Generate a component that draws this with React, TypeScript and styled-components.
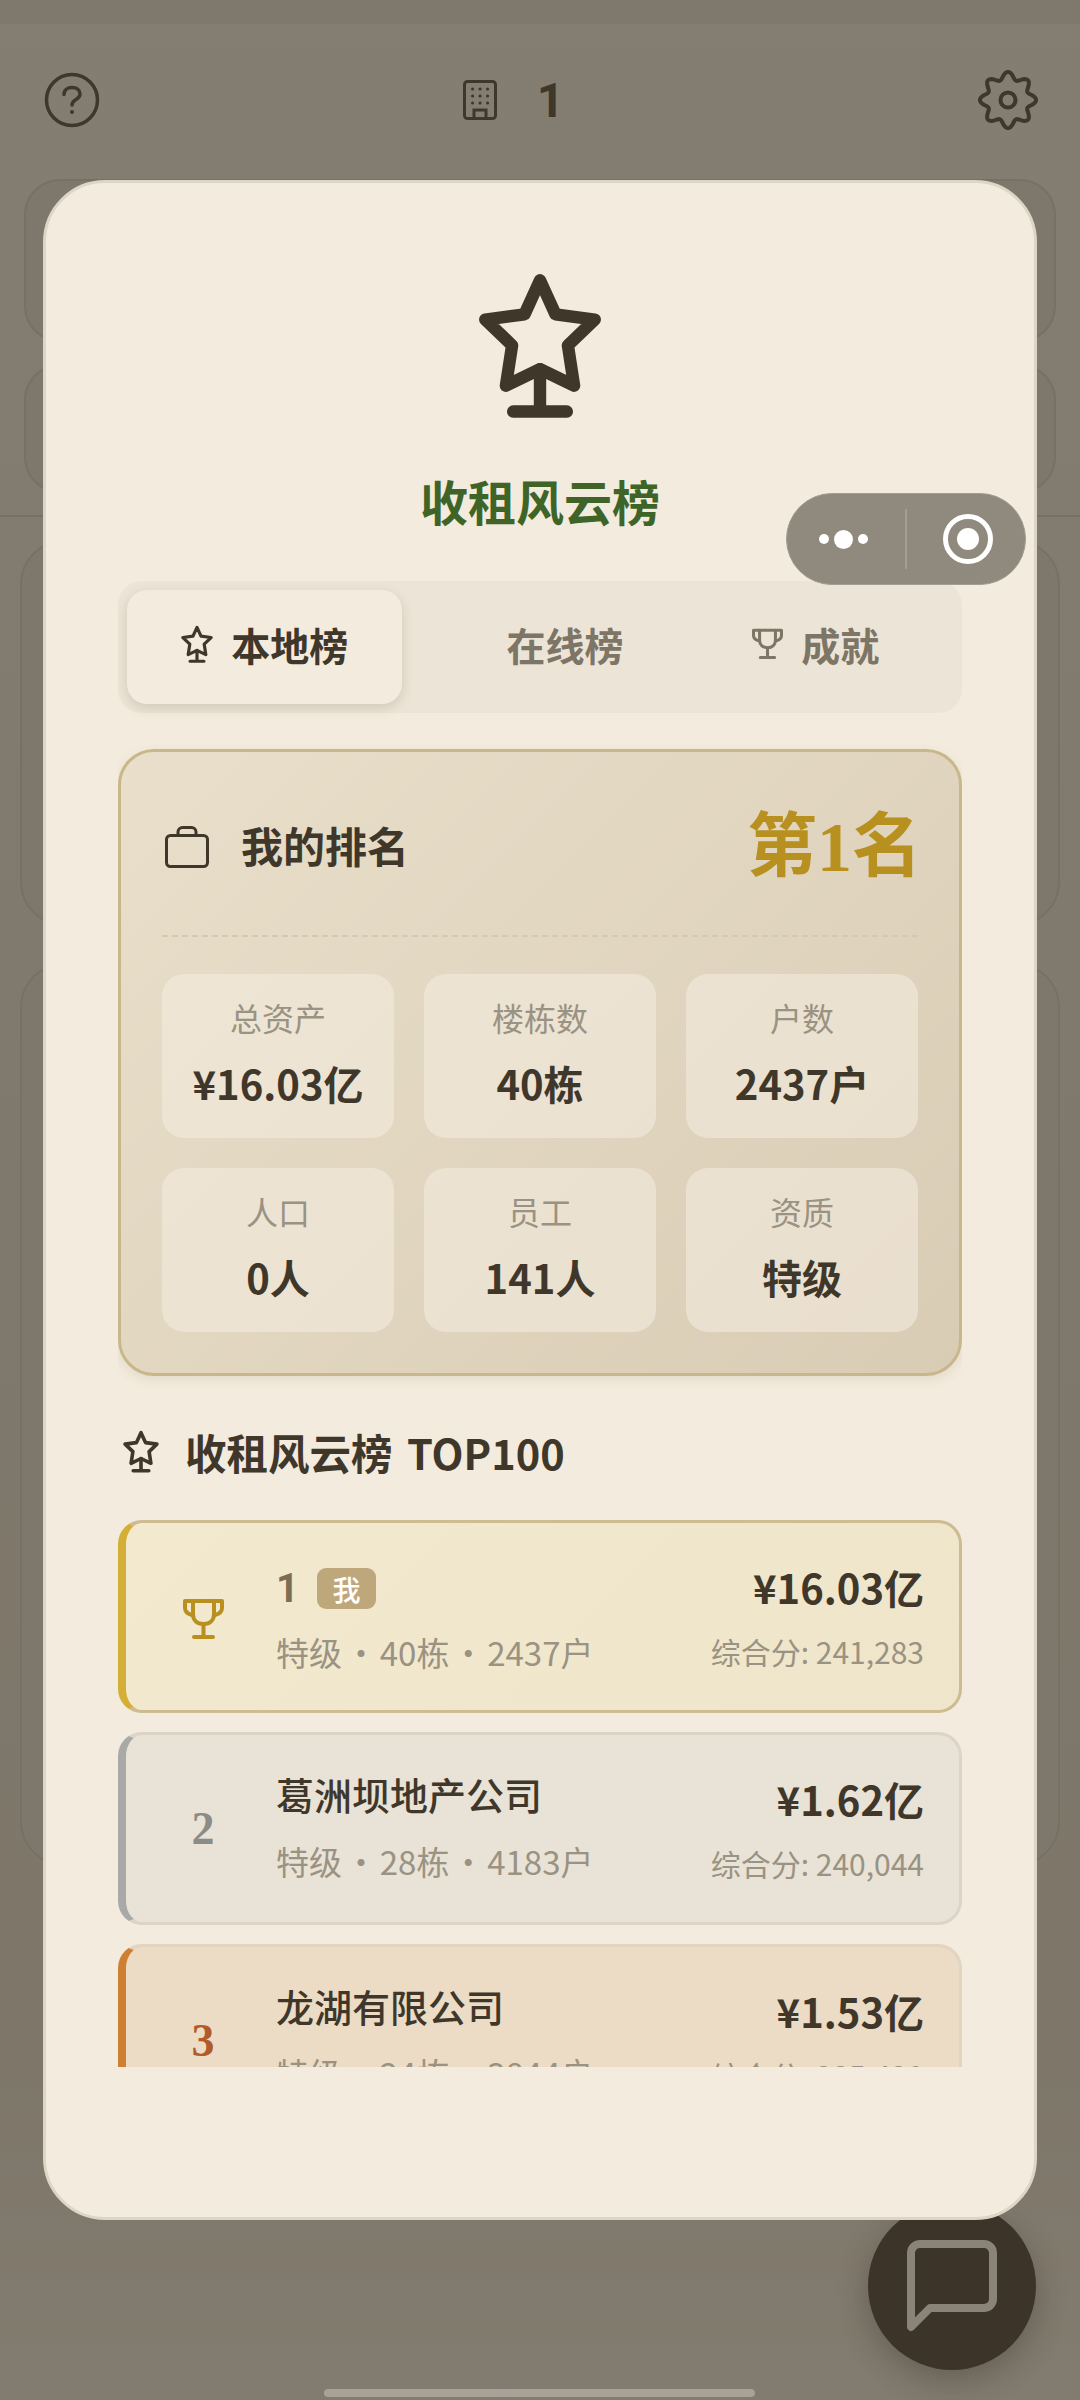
import React from "react";
import styled, { createGlobalStyle } from "styled-components";

const SANS = `"Noto Sans CJK SC", "Noto Sans", sans-serif`;
const SERIF = `"Liberation Serif", "Noto Sans CJK SC", serif`;

type Stat = { label: string; value: string };
type Tier = "gold" | "silver" | "bronze";
type Row = {
  tier: Tier;
  rank: string;
  name: string;
  mine?: boolean;
  meta: string;
  assets: string;
  score: string;
};

const stats: Stat[] = [
  { label: "总资产", value: "¥16.03亿" },
  { label: "楼栋数", value: "40栋" },
  { label: "户数", value: "2437户" },
  { label: "人口", value: "0人" },
  { label: "员工", value: "141人" },
  { label: "资质", value: "特级" },
];

const rows: Row[] = [
  { tier: "gold", rank: "1", name: "1", mine: true, meta: "特级 · 40栋 · 2437户", assets: "¥16.03亿", score: "综合分: 241,283" },
  { tier: "silver", rank: "2", name: "葛洲坝地产公司", meta: "特级 · 28栋 · 4183户", assets: "¥1.62亿", score: "综合分: 240,044" },
  { tier: "bronze", rank: "3", name: "龙湖有限公司", meta: "特级 · 24栋 · 3844户", assets: "¥1.53亿", score: "综合分: 235,420" },
];

const tierColors = {
  gold: { bar: "#d4af37", border: "#cdbb92", bg: "linear-gradient(135deg, #f3e9cf, #efe5ca)" },
  silver: { bar: "#a9a9a7", border: "#dbd4c7", bg: "#e9e2d6" },
  bronze: { bar: "#cd7f32", border: "#e2d5c0", bg: "#ecdcc6" },
};

const StarStand = ({ size }: { size: number }) => (
  <svg width={size} height={(size * 142) / 120} viewBox="0 0 120 142" fill="none" stroke="currentColor" strokeWidth="12" strokeLinecap="round" strokeLinejoin="round">
    <path d="M60 9L75 42 113 47 87 72 93 111 60 95 27 111 33 72 7 47 45 42Z" />
    <path d="M60 95V136M34 136H86" />
  </svg>
);

const Trophy = ({ size }: { size: number }) => (
  <svg width={size} height={(size * 42) / 41} viewBox="0 0 41 42" fill="none" stroke="currentColor" strokeWidth="4" strokeLinecap="round" strokeLinejoin="round">
    <path d="M2 3H39V10C39 14 36 16 32 17M2 3V10C2 14 5 16 9 17" />
    <path d="M10 3V16C10 22 14 26 20.500 26S31 22 31 16V3" />
    <path d="M20.500 26V39M11 39H30" />
  </svg>
);

// 8-lobed wavy gear outline
const gearPath = (() => {
  const pts: string[] = [];
  for (let i = 0; i < 160; i++) {
    const t = (i / 160) * Math.PI * 2;
    const r = 24.5 + 3.6 * Math.cos(8 * t);
    pts.push(`${(30 + r * Math.sin(t)).toFixed(2)} ${(30 - r * Math.cos(t)).toFixed(2)}`);
  }
  return `M${pts.join("L")}Z`;
})();

export default function App() {
  return (
    <Screen>
      <GlobalStyle />
      <StatusStrip />
      <TopBar>
        <svg width="56" height="56" viewBox="0 0 56 56" fill="none" stroke="#40372b" strokeWidth="3.500" strokeLinecap="round">
          <circle cx="28" cy="28" r="25.500" />
          <path d="M20 22.500c0-4.500 3.500-7 8-7s8 2.500 8 6.500c0 6-8 5-8 11" />
          <circle cx="28" cy="40" r="2" fill="#40372b" stroke="none" />
        </svg>
        <CityBadge>
          <svg width="34" height="40" viewBox="0 0 34 40" fill="none" stroke="#40372b" strokeWidth="3" strokeLinecap="round">
            <rect x="1.500" y="1.500" width="31" height="37" rx="3" />
            <path d="M11 38v-8h12v8" />
            <path d="M9.500 9h.1M17 9h.1M24.500 9h.1M9.500 16h.1M17 16h.1M24.500 16h.1M9.500 23h.1M17 23h.1M24.500 23h.1" strokeWidth="3" />
          </svg>
          <CityCount>1</CityCount>
        </CityBadge>
        <svg width="60" height="60" viewBox="0 0 60 60" fill="none" stroke="#40372b" strokeWidth="4">
          <path d={gearPath} />
          <circle cx="30" cy="30" r="7.500" />
        </svg>
      </TopBar>
      <GhostRow $h={163} />
      <GhostRow $h={129} />
      <GhostRule />
      <GhostCard $h={386} />
      <GhostCard $h={903} />

      <Fab>
        <svg width="92" height="92" viewBox="0 0 92 92" fill="none" stroke="#8a8377" strokeWidth="8" strokeLinejoin="round">
          <path d="M5 13a9 9 0 0 1 9-9h64a9 9 0 0 1 9 9v46a9 9 0 0 1-9 9H24L5 87z" />
        </svg>
      </Fab>
      <HomeBar />

      <Modal>
        <ModalBody>
          <HeroIcon>
            <StarStand size={124} />
          </HeroIcon>
          <Title>收租风云榜</Title>
          <Tabs>
            <Tab $active>
              <TabIcon><StarStand size={32} /></TabIcon>
              本地榜
            </Tab>
            <Tab>
              <TabIcon />
              在线榜
            </Tab>
            <Tab>
              <TabIcon><Trophy size={31} /></TabIcon>
              成就
            </Tab>
          </Tabs>

          <RankCard>
            <RankHead>
              <RankLabel>
                <svg width="44" height="42" viewBox="0 0 44 42" fill="none" stroke="#40372b" strokeWidth="3">
                  <rect x="1.500" y="9.500" width="41" height="31" rx="4" />
                  <path d="M13 9.500V6a4.500 4.500 0 0 1 4.500-4.500h9A4.500 4.500 0 0 1 31 6v3.500" />
                </svg>
                我的排名
              </RankLabel>
              <RankValue>第1名</RankValue>
            </RankHead>
            <StatGrid>
              {stats.map((s) => (
                <StatBox key={s.label}>
                  <StatLabel>{s.label}</StatLabel>
                  <StatValue>{s.value}</StatValue>
                </StatBox>
              ))}
            </StatGrid>
          </RankCard>

          <SectionTitle>
            <StarStand size={36} />
            收租风云榜 TOP100
          </SectionTitle>

          <List>
            {rows.map((r) => (
              <RowCard key={r.rank} $tier={r.tier}>
                <RankCell $tier={r.tier}>
                  {r.tier === "gold" ? <Trophy size={41} /> : r.rank}
                </RankCell>
                <RowMain>
                  <RowName $mine={r.mine}>
                    {r.mine ? <MyRankName>{r.name}</MyRankName> : r.name}
                    {r.mine && <MeBadge>我</MeBadge>}
                  </RowName>
                  <RowMeta>{r.meta}</RowMeta>
                </RowMain>
                <RowSide>
                  <RowAssets>{r.assets}</RowAssets>
                  <RowScore>{r.score}</RowScore>
                </RowSide>
              </RowCard>
            ))}
          </List>
        </ModalBody>
      </Modal>

      <Capsule>
        <Dots>
          <Dot />
          <Dot $big />
          <Dot />
        </Dots>
        <CapsuleDivider />
        <RecordRing />
      </Capsule>
    </Screen>
  );
}

const GlobalStyle = createGlobalStyle`
  html, body {
    margin: 0;
    padding: 0;
  }
  body {
    font-family: ${SANS};
  }
  * {
    box-sizing: border-box;
  }
`;

const Screen = styled.div`
  position: relative;
  width: 1080px;
  height: 2400px;
  overflow: hidden;
  background: linear-gradient(180deg, #847d71 0%, #7f786c 50%, #7d7669 85%, #827b6f 100%);
  display: flex;
  flex-direction: column;
  align-items: center;
`;

const StatusStrip = styled.div`
  width: 100%;
  height: 24px;
  flex: none;
  background: #7f786c;
`;

const TopBar = styled.div`
  width: 100%;
  height: 155px;
  flex: none;
  padding: 0 42px 3px 44px;
  display: flex;
  align-items: center;
  justify-content: space-between;
`;

const CityBadge = styled.div`
  display: flex;
  align-items: center;
  gap: 40px;
  margin-right: 51px;
`;

const CityCount = styled.span`
  font-family: "Roboto", sans-serif;
  font-size: 48px;
  font-weight: 700;
  color: #40372b;
`;

const GhostRow = styled.div<{ $h: number }>`
  width: 1032px;
  height: ${(p) => p.$h}px;
  margin-bottom: 22px;
  border-radius: 36px;
  background: #7e776b;
  border: 2px solid #777165;
  flex: none;
`;

const GhostRule = styled.div`
  width: 100%;
  height: 2px;
  margin-bottom: 23px;
  background: #777165;
  flex: none;
`;

const GhostCard = styled.div<{ $h: number }>`
  width: 1040px;
  height: ${(p) => p.$h}px;
  margin-bottom: 37px;
  border-radius: 44px;
  background: #7e776b;
  border: 2px solid #777165;
  flex: none;
`;

const Fab = styled.div`
  position: absolute;
  left: 868px;
  top: 2202px;
  width: 168px;
  height: 168px;
  border-radius: 50%;
  background: #3d3429;
  box-shadow: 0 10px 30px rgba(40, 33, 24, 0.3);
  display: flex;
  align-items: center;
  justify-content: center;
`;

const HomeBar = styled.div`
  position: absolute;
  left: 324px;
  top: 2389px;
  width: 431px;
  height: 8px;
  border-radius: 4px;
  background: #a8a197;
`;

const Modal = styled.div`
  position: absolute;
  left: 43px;
  top: 180px;
  width: 994px;
  height: 2040px;
  padding: 0 72px 150px;
  border-radius: 62px;
  border: 3px solid #ddd5c6;
  background: #f3ebdd;
  display: flex;
  flex-direction: column;
`;

const ModalBody = styled.div`
  flex: 1;
  min-height: 0;
  overflow: hidden;
`;

const HeroIcon = styled.div`
  display: flex;
  justify-content: center;
  padding-top: 88px;
  color: #40372b;
  line-height: 0;
`;

const Title = styled.h1`
  margin: 47px 0 0;
  text-align: center;
  font-size: 48px;
  line-height: 70px;
  font-weight: 700;
  color: #3f6427;
`;

const Tabs = styled.div`
  margin-top: 46px;
  height: 132px;
  padding: 9px;
  display: flex;
  border-radius: 24px;
  background: #ece4d6;
`;

const Tab = styled.div<{ $active?: boolean }>`
  flex: 1;
  padding-bottom: 5px;
  display: flex;
  align-items: center;
  justify-content: center;
  gap: 18px;
  border-radius: 20px;
  font-size: 39px;
  font-weight: 700;
  color: ${(p) => (p.$active ? "#40372b" : "#7d7566")};
  background: ${(p) => (p.$active ? "#f3ebdd" : "transparent")};
  box-shadow: ${(p) => (p.$active ? "0 4px 12px rgba(90, 75, 50, 0.18)" : "none")};
`;

const TabIcon = styled.span`
  width: 32px;
  display: flex;
  justify-content: center;
  line-height: 0;
`;

const RankCard = styled.section`
  margin-top: 36px;
  height: 627px;
  padding: 0 41px;
  border-radius: 36px;
  border: 3px solid #c9b78c;
  background: linear-gradient(135deg, #e9dfca, #d9ccb5);
  box-shadow: 0 4px 12px rgba(90, 75, 50, 0.1);
`;

const RankHead = styled.div`
  height: 185px;
  padding-top: 2px;
  display: flex;
  align-items: center;
  justify-content: space-between;
  border-bottom: 2px dashed #d5c9b2;
`;

const RankLabel = styled.div`
  display: flex;
  align-items: center;
  gap: 32px;
  font-size: 42px;
  font-weight: 700;
  color: #40372b;
  svg {
    margin: 6px 0 0 3px;
  }
`;

const RankValue = styled.div`
  font-family: ${SERIF};
  font-size: 70px;
  font-weight: 700;
  color: #b8901f;
  margin: -7px -4px 0 0;
`;

const StatGrid = styled.div`
  margin-top: 37px;
  display: grid;
  grid-template-columns: repeat(3, 1fr);
  grid-auto-rows: 164px;
  gap: 30px;
`;

const StatBox = styled.div`
  padding-top: 19px;
  text-align: center;
  border-radius: 22px;
  background: rgba(243, 235, 221, 0.6);
`;

const StatLabel = styled.div`
  font-size: 32px;
  line-height: 48px;
  color: #9a9282;
`;

const StatValue = styled.div`
  margin-top: 18px;
  font-size: 40px;
  line-height: 48px;
  font-weight: 700;
  color: #40372b;
`;

const SectionTitle = styled.h2`
  margin: 46px 0 0;
  padding-left: 5px;
  height: 60px;
  display: flex;
  align-items: center;
  gap: 26px;
  font-size: 41.500px;
  font-weight: 700;
  word-spacing: 5px;
  color: #40372b;
`;

const List = styled.div`
  margin-top: 38px;
  display: flex;
  flex-direction: column;
  gap: 19px;
`;

const RowCard = styled.div<{ $tier: Tier }>`
  flex: none;
  height: 193px;
  display: flex;
  align-items: stretch;
  padding-right: 35px;
  border-radius: 24px;
  border: 3px solid ${(p) => tierColors[p.$tier].border};
  border-left: 8px solid ${(p) => tierColors[p.$tier].bar};
  background: ${(p) => tierColors[p.$tier].bg};
`;

const RankCell = styled.div<{ $tier: Tier }>`
  width: 150px;
  flex: none;
  padding-left: 4px;
  display: flex;
  align-items: center;
  justify-content: center;
  font-family: ${SERIF};
  font-size: 46px;
  font-weight: 700;
  color: ${(p) => (p.$tier === "gold" ? "#b8901f" : p.$tier === "silver" ? "#8b8b88" : "#b25b2a")};
  svg {
    margin-top: 6px;
  }
`;

const RowMain = styled.div`
  flex: 1;
  min-width: 0;
`;

const RowName = styled.div<{ $mine?: boolean }>`
  margin: ${(p) => (p.$mine ? "39px 0 12px" : "32px 0 16px")};
  height: 54px;
  display: flex;
  align-items: center;
  gap: 18px;
  font-size: 38px;
  font-weight: 500;
  color: #40372b;
`;

const MyRankName = styled.span`
  font-family: "Roboto", sans-serif;
  font-weight: 700;
  color: #7d6d52;
  font-size: 40px;
`;

const MeBadge = styled.span`
  width: 59px;
  height: 41px;
  display: flex;
  align-items: center;
  justify-content: center;
  border-radius: 9px;
  font-size: 28px;
  font-weight: 500;
  color: #fff;
  background: #bfa77c;
`;

const RowMeta = styled.div`
  font-size: 33px;
  line-height: 48px;
  word-spacing: -5px;
  color: #9a9282;
`;

const RowSide = styled.div`
  flex: none;
  text-align: right;
`;

const RowAssets = styled.div`
  margin-top: 37px;
  height: 54px;
  line-height: 54px;
  font-size: 40px;
  font-weight: 700;
  color: #40372b;
`;

const RowScore = styled.div`
  margin-top: 13px;
  font-size: 30px;
  line-height: 48px;
  color: #9a9282;
`;

const Capsule = styled.div`
  position: absolute;
  left: 786px;
  top: 493px;
  width: 240px;
  height: 92px;
  border-radius: 46px;
  background: #8f897e;
  border: 1px solid #a39d92;
  display: flex;
  align-items: center;
`;

const Dots = styled.div`
  width: 118px;
  padding-right: 6px;
  display: flex;
  align-items: center;
  justify-content: center;
  gap: 5px;
`;

const Dot = styled.span<{ $big?: boolean }>`
  width: ${(p) => (p.$big ? 19 : 10)}px;
  height: ${(p) => (p.$big ? 19 : 10)}px;
  border-radius: 50%;
  background: #fff;
`;

const CapsuleDivider = styled.span`
  width: 2px;
  height: 60px;
  background: #a39d92;
`;

const RecordRing = styled.span`
  margin-left: 36px;
  width: 50px;
  height: 50px;
  border-radius: 50%;
  border: 5px solid #fff;
  position: relative;
  &::after {
    content: "";
    position: absolute;
    inset: 9px;
    border-radius: 50%;
    background: #fff;
  }
`;
